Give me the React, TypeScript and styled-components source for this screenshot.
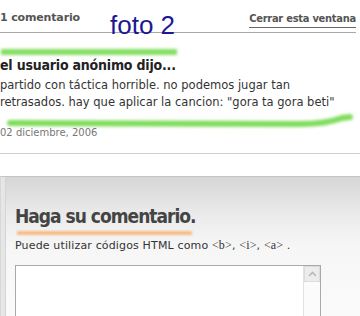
import React from "react";
import styled, { createGlobalStyle } from "styled-components";

const Global = createGlobalStyle`
  html, body {
    margin: 0;
    padding: 0;
    background: #fff;
    font-family: "DejaVu Sans", Verdana, sans-serif;
  }
`;

const condensed = `"DejaVu Sans Condensed", "DejaVu Sans", Tahoma, sans-serif`;

const Page = styled.div`
  width: 360px;
  height: 316px;
  overflow: hidden;
`;

const TopBar = styled.div`
  display: flex;
  align-items: flex-start;
  width: 356px;
  height: 33px;
  border-bottom: 1px solid #a8a8a8;
  box-sizing: border-box;
`;

const Count = styled.span`
  width: 80px;
  margin-top: 11px;
  font-size: 11px;
  line-height: 14px;
  font-weight: bold;
  letter-spacing: -0.15px;
  white-space: nowrap;
  color: #555;
`;

const Foto = styled.span`
  margin-left: 30px;
  margin-top: 11px;
  font-family: "Liberation Sans", Arial, sans-serif;
  font-size: 26px;
  line-height: 28px;
  color: #1c1894;
`;

const CloseLink = styled.a`
  margin-left: auto;
  margin-top: 12px;
  padding-bottom: 1px;
  font-family: ${condensed};
  font-size: 11px;
  line-height: 14px;
  font-weight: bold;
  letter-spacing: -0.25px;
  color: #555;
  border-bottom: 1px solid #666;
  cursor: pointer;
`;

const Stroke = styled.svg<{ $h: number }>`
  display: block;
  width: 360px;
  height: ${(p) => p.$h}px;
  overflow: visible;
`;

const Author = styled.h3`
  margin: 0;
  font-family: ${condensed};
  font-size: 14px;
  line-height: 17px;
  font-weight: bold;
  letter-spacing: -0.2px;
  color: #222;
`;

const Body = styled.p`
  margin: 3px 0 0;
  font-size: 11.5px;
  line-height: 17px;
  color: #333;
`;

const DateLine = styled.div`
  position: relative;
  margin-top: 1px;
  font-size: 10px;
  line-height: 14px;
  color: #777;
`;

const Divider = styled.hr`
  margin: 13px 0 0;
  border: 0;
  border-top: 1px solid #d0d0d0;
`;

const Panel = styled.section`
  margin-top: 22px;
  height: 200px;
  padding: 28px 0 0 14px;
  border-top: 1px solid #c4c4c4;
  border-left: 1px solid #d8d8d8;
  box-shadow: inset 4px 0 0 #e6e6e6, inset 5px 0 0 #d4d4d4;
  background: linear-gradient(180deg, #d6d6d6 0px, #ececec 40px, #f6f6f6 70px, #fafafa 120px);
`;

const PanelTitle = styled.h2`
  margin: 0;
  font-family: ${condensed};
  font-size: 19px;
  line-height: 23px;
  font-weight: bold;
  letter-spacing: -1px;
  color: #444;
`;

const Hint = styled.div`
  font-size: 11px;
  line-height: 14px;
  letter-spacing: 0.15px;
  color: #333;
`;

const TextBox = styled.div`
  position: relative;
  margin-top: 12px;
  width: 306px;
  height: 80px;
  background: #fff;
  border: 1px solid #a9a9a9;
  box-sizing: border-box;
`;

const Scrollbar = styled.div`
  position: absolute;
  top: 0;
  right: 0;
  bottom: 0;
  width: 16px;
  border-left: 1px solid #e2e2e2;
  background: #fbfbfb;
`;

const ArrowButton = styled.div`
  height: 16px;
  display: flex;
  align-items: center;
  justify-content: center;
  background: #ececec;
  border: 1px solid #dcdcdc;
  box-sizing: border-box;
`;

const Tag = styled.span`
  font-family: "Liberation Serif", serif;
  font-size: 12px;
`;

export default function App() {
  return (
    <Page>
      <Global />
      <TopBar>
        <Count>1 comentario</Count>
        <Foto>foto 2</Foto>
        <CloseLink>Cerrar esta ventana</CloseLink>
      </TopBar>

      <Stroke $h={24} viewBox="0 0 360 24">
        <defs>
          <filter id="blurG" filterUnits="userSpaceOnUse" x="-10" y="0" width="380" height="40">
            <feGaussianBlur stdDeviation="1.4" />
          </filter>
        </defs>
        <path d="M1 19 L177 19" stroke="#84de62" strokeWidth="6" filter="url(#blurG)" />
      </Stroke>
      <Author>el usuario anónimo dijo...</Author>
      <Body>
        partido con táctica horrible. no podemos jugar tan
        <br />
        retrasados. hay que aplicar la cancion: "gora ta gora beti"
      </Body>
      <Stroke $h={14} viewBox="0 0 360 14">
        <defs>
          <filter id="blurW" filterUnits="userSpaceOnUse" x="-10" y="-10" width="380" height="40">
            <feGaussianBlur stdDeviation="1.5" />
          </filter>
        </defs>
        <path
          d="M10 12 C120 13 240 13 300 13 C320 13 334 10 342 7 L350 6"
          fill="none"
          stroke="#7fdc5c"
          strokeWidth="6"
          strokeLinecap="round"
          filter="url(#blurW)"
        />
      </Stroke>
      <DateLine>02 diciembre, 2006</DateLine>
      <Divider />

      <Panel>
        <PanelTitle>Haga su comentario.</PanelTitle>
        <Stroke $h={10} viewBox="0 0 360 10">
          <defs>
            <filter id="blurO" filterUnits="userSpaceOnUse" x="-10" y="-10" width="380" height="30">
              <feGaussianBlur stdDeviation="1.2" />
            </filter>
          </defs>
          <path d="M2 5 L177 5" stroke="#f8bd86" strokeWidth="4" filter="url(#blurO)" />
        </Stroke>
        <Hint>
          Puede utilizar códigos HTML como <Tag>&lt;b&gt;</Tag>, <Tag>&lt;i&gt;</Tag>, <Tag>&lt;a&gt;</Tag> .
        </Hint>
        <TextBox>
          <Scrollbar>
            <ArrowButton>
              <svg width="9" height="6" viewBox="0 0 9 6">
                <path d="M1 5 L4.5 1.5 L8 5" fill="none" stroke="#b8b8b8" strokeWidth="1.6" />
              </svg>
            </ArrowButton>
          </Scrollbar>
        </TextBox>
      </Panel>
    </Page>
  );
}
